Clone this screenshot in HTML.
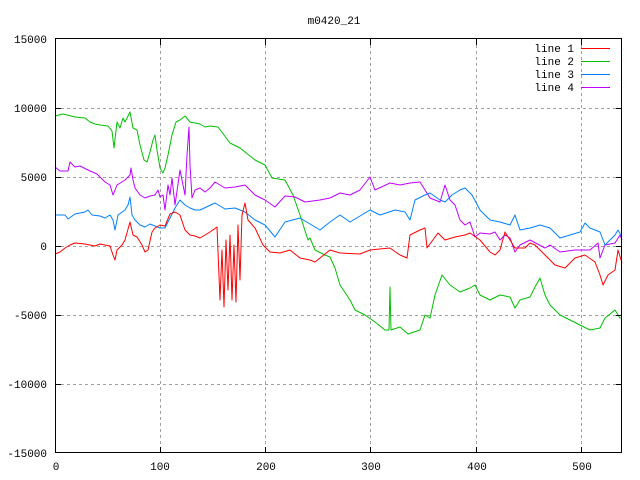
<!DOCTYPE html>
<html><head><meta charset="utf-8"><style>
html,body{margin:0;padding:0;background:#fff;}
svg{display:block;}
text{font-family:"Liberation Mono",monospace;font-size:11px;fill:#000;}
</style></head><body>
<svg width="640" height="480" viewBox="0 0 640 480" xmlns="http://www.w3.org/2000/svg">
<rect width="640" height="480" fill="#fff"/>
<g stroke="#a0a0a0" stroke-width="1" stroke-dasharray="3,3" fill="none">
<path d="M55 108.5H622M55 177.5H622M55 246.5H622M55 315.5H622M55 384.5H622"/>
<path d="M160.5 39V453M265.5 39V453M370.5 39V453M476.5 39V453M581.5 39V453"/>
</g>
<g fill="none" stroke-width="1" stroke-linejoin="round">
<polyline stroke="#00c000" points="55,116 63,114 75,117 85,118 90,122 95,124 100,125 108,126 112,131 114,148 117,122 120,128 123,118 125,122 130,112 133,128 137,130 140,145 144,160 147,162 150,152 153,140 155,135 157,150 160,168 163,173 165,168 168,155 172,135 176,122 180,120 185,116 190,122 195,123 200,124 205,127 210,126 218,127 230,143 240,148 255,160 265,165 272,178 285,180 293,195 300,215 308,240 310,238 315,250 325,255 330,257 335,268 340,285 350,300 355,310 365,315 375,322 385,330 389,330 390,287 391,330 400,327 408,334 420,330 425,315 430,318 435,295 442,275 450,285 460,292 470,288 475,285 480,295 490,300 500,295 510,297 515,308 520,300 530,297 535,287 540,278 545,295 550,305 560,315 570,320 580,325 590,330 600,328 605,318 615,310 620,318 622,318"/>
<polyline stroke="#c000ff" points="55,167 60,171 68,171 70,162 75,167 80,166 90,171 97,174 105,182 110,185 113,195 117,185 125,180 130,175 131,168 133,180 135,188 140,195 145,198 150,196 155,195 158,190 160,197 163,195 165,210 168,185 170,195 172,178 175,205 180,170 183,185 185,195 187,155 189,127 190,165 192,198 195,190 200,188 205,192 210,188 215,182 225,188 235,187 245,185 255,195 265,200 275,207 285,196 295,197 305,202 320,200 330,198 340,193 350,195 360,190 370,177 375,190 390,183 400,185 410,183 420,182 425,190 430,198 440,202 445,185 450,200 455,205 460,220 465,225 470,222 475,237 480,233 490,234 495,232 500,240 505,235 510,238 515,252 520,245 530,240 545,248 550,245 560,252 575,250 590,250 598,243 600,258 605,245 615,243 620,235 622,240"/>
<polyline stroke="#0080ff" points="55,215 65,215 68,219 75,214 85,212 88,210 92,215 100,216 105,218 110,215 113,220 115,230 118,215 125,210 128,205 130,197 132,215 135,220 140,225 145,227 150,224 155,226 160,228 165,228 170,218 175,208 180,200 185,205 190,208 195,210 200,210 215,203 225,209 235,208 245,212 255,220 265,225 275,237 285,222 300,218 310,224 320,230 330,222 340,215 350,222 360,216 370,210 380,215 395,210 405,212 410,220 415,200 425,195 430,193 440,200 445,202 452,195 460,190 465,188 472,195 480,210 490,220 500,222 510,225 515,215 520,230 530,228 540,225 550,228 560,238 570,235 580,232 585,223 590,228 600,232 605,245 615,235 618,230 622,237"/>
<polyline stroke="#ff0000" points="55,254 60,252 65,248 70,245 75,243 85,244 95,246 100,244 110,246 113,255 115,260 117,250 122,245 125,240 130,222 133,235 137,237 142,245 145,252 148,250 152,232 155,228 160,225 165,226 170,214 175,212 180,215 185,230 190,235 195,236 200,238 210,232 217,227 220,300 222,250 224,307 226,240 228,290 230,235 232,300 234,245 236,302 238,225 240,280 242,215 245,203 248,220 255,228 263,245 270,252 280,253 290,250 300,258 310,260 315,262 330,250 340,253 360,254 370,250 390,248 400,255 407,258 410,235 420,230 425,228 427,248 438,233 445,240 455,237 465,235 470,233 480,240 490,252 495,255 500,250 505,232 510,240 515,248 525,248 530,243 535,245 545,255 555,265 565,268 575,258 585,255 595,262 600,275 603,285 608,275 615,270 618,250 622,263"/>
</g>
<rect x="55.5" y="38.5" width="566" height="414" fill="none" stroke="#000" stroke-width="1"/>
<g stroke="#000" stroke-width="1">
<path d="M55 108.5h6M55 177.5h6M55 246.5h6M55 315.5h6M55 384.5h6M622 108.5h-6M622 177.5h-6M622 246.5h-6M622 315.5h-6M622 384.5h-6"/>
<path d="M160.5 453v-6M265.5 453v-6M370.5 453v-6M476.5 453v-6M581.5 453v-6M160.5 39v6M265.5 39v6M370.5 39v6M476.5 39v6M581.5 39v6"/>
</g>
<g text-anchor="end">
<text x="47" y="43">15000</text>
<text x="47" y="112">10000</text>
<text x="47" y="181">5000</text>
<text x="47" y="250">0</text>
<text x="47" y="319">-5000</text>
<text x="47" y="388">-10000</text>
<text x="47" y="457">-15000</text>
</g>
<g text-anchor="middle">
<text x="56" y="470">0</text>
<text x="160" y="470">100</text>
<text x="266" y="470">200</text>
<text x="371" y="470">300</text>
<text x="477" y="470">400</text>
<text x="582" y="470">500</text>
<text x="334" y="24">m0420_21</text>
</g>
<g text-anchor="end">
<text x="574" y="52">line 1</text>
<text x="574" y="65">line 2</text>
<text x="574" y="78">line 3</text>
<text x="574" y="91">line 4</text>
</g>
<g stroke-width="1">
<path d="M581 48.5h29" stroke="#ff0000"/>
<path d="M581 61.5h29" stroke="#00c000"/>
<path d="M581 74.5h29" stroke="#0080ff"/>
<path d="M581 87.5h29" stroke="#c000ff"/>
</g>
</svg>
</body></html>
